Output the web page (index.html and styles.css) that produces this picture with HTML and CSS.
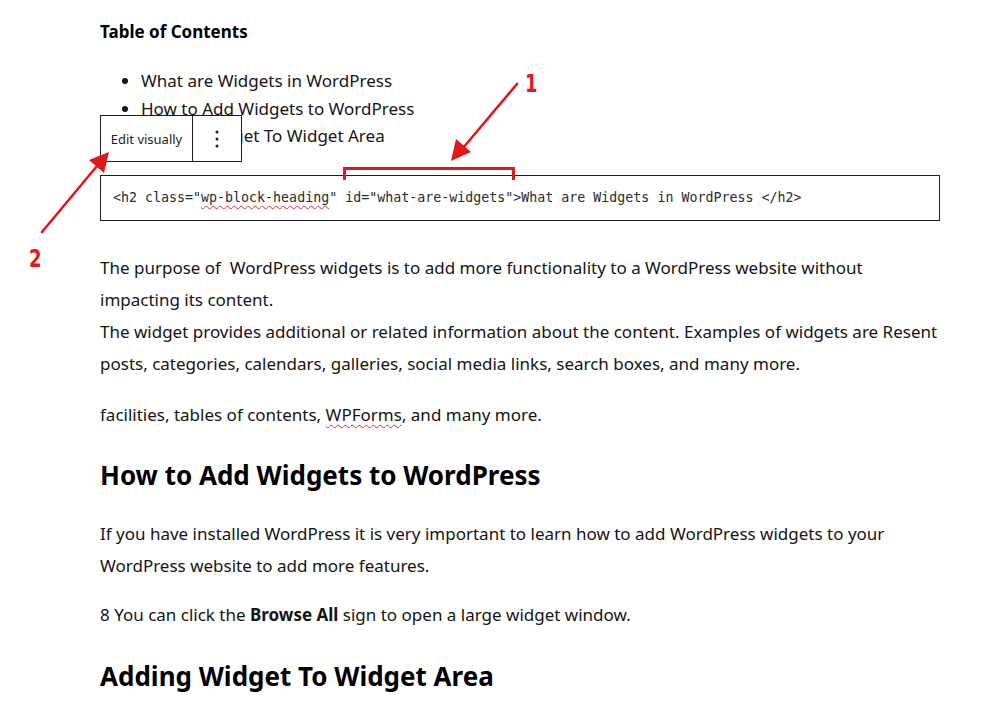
FILE: index.html
```html
<!DOCTYPE html>
<html lang="en">
<head>
<meta charset="utf-8">
<title>Widgets</title>
<link rel="stylesheet" href="styles.css">
</head>
<body>
<div class="page">
  <div class="content">
    <p class="toc-title">Table of Contents</p>
    <ul class="toc">
      <li>What are Widgets in WordPress</li>
      <li>How to Add Widgets to WordPress</li>
      <li>Adding Widget To Widget Area</li>
    </ul>
    <div class="code-block">&lt;h2 class="<span class="typo">wp-block-heading</span>" id="what-are-widgets"&gt;What are Widgets in WordPress &lt;/h2&gt;</div>
    <p class="para">The purpose of &nbsp;WordPress widgets is to add more functionality to a WordPress website without<br>impacting its content.<br>The widget provides additional or related information about the content. Examples of widgets are Resent<br>posts, categories, calendars, galleries, social media links, search boxes, and many more.</p>
    <p class="para p2">facilities, tables of contents, <span class="typo">WPForms</span>, and many more.</p>
    <h2 class="heading h-first">How to Add Widgets to WordPress</h2>
    <p class="para p3">If you have installed WordPress it is very important to learn how to add WordPress widgets to your<br>WordPress website to add more features.</p>
    <p class="para p4">8 You can click the <strong>Browse All</strong> sign to open a large widget window.</p>
    <h2 class="heading h-second">Adding Widget To Widget Area</h2>
  </div>

  <div class="toolbar">
    <button class="tb-btn tb-edit">Edit visually</button>
    <button class="tb-btn tb-more" aria-label="Options">
      <svg width="4" height="18" viewBox="0 0 4 18"><circle cx="2" cy="2" r="1.5" fill="#1e1e1e"/><circle cx="2" cy="9" r="1.5" fill="#1e1e1e"/><circle cx="2" cy="16" r="1.5" fill="#1e1e1e"/></svg>
    </button>
  </div>

  <svg class="annot" width="984" height="716" viewBox="0 0 984 716">
    <path d="M344.5 180 V168.5 H513.5 V180" fill="none" stroke="#e3161b" stroke-width="3"/>
    <line x1="517" y1="84" x2="463" y2="148" stroke="#e3161b" stroke-width="2.6" stroke-linecap="round"/>
    <polygon points="451,161 456,139 471,152" fill="#e3161b"/>
    <line x1="42" y1="232" x2="97" y2="166" stroke="#e3161b" stroke-width="2.6" stroke-linecap="round"/>
    <polygon points="109,152 104,173 89,160" fill="#e3161b"/>
  </svg>
  <span class="num num1">1</span>
  <span class="num num2">2</span>
</div>
</body>
</html>
```
FILE: styles.css
```css
html, body {
  margin: 0;
  padding: 0;
  background: #ffffff;
}
.page {
  position: relative;
  width: 984px;
  height: 716px;
  overflow: hidden;
  font-family: "Noto Sans", "Open Sans", sans-serif;
  color: #141414;
}
.content {
  padding-left: 100px;
  width: 840px;
}
.toc-title {
  margin: 20px 0 0;
  font-size: 17px;
  line-height: 24px;
  font-weight: 700;
  color: #000;
}
.toc {
  margin: 23px 0 0;
  padding-left: 41px;
  font-size: 17px;
  line-height: 27.5px;
}
.code-block {
  margin-top: 25px;
  height: 44px;
  border: 1px solid #1e1e1e;
  box-sizing: content-box;
  padding: 0 12px;
  display: flex;
  align-items: center;
  font-family: "DejaVu Sans Mono", "Liberation Mono", monospace;
  font-size: 13.3px;
  color: #2b2b2b;
  white-space: pre;
}
.typo {
  text-decoration: underline wavy #d92b2b;
  text-decoration-thickness: 1px;
  text-underline-offset: 3px;
}
.para {
  margin: 31px 0 0;
  font-size: 17px;
  line-height: 32px;
  white-space: nowrap;
}
.p2 { margin-top: 19px; }
.p3 { margin-top: 25px; }
.p4 { margin-top: 17px; }
.heading {
  margin: 26px 0 0;
  font-size: 26px;
  line-height: 36px;
  font-weight: 700;
  color: #000;
}
.h-second { margin-top: 27px; }

.toolbar {
  position: absolute;
  left: 100px;
  top: 115px;
  display: flex;
  height: 47px;
  border: 1px solid #1e1e1e;
  box-sizing: border-box;
  background: #fff;
}
.tb-btn {
  border: 0;
  background: transparent;
  margin: 0;
  padding: 0;
  font-family: "Noto Sans", "Open Sans", sans-serif;
  color: #1e1e1e;
  display: flex;
  align-items: center;
  justify-content: center;
}
.tb-edit {
  width: 92px;
  font-size: 13px;
  border-right: 1px solid #1e1e1e;
}
.tb-more {
  width: 48px;
}
.annot {
  position: absolute;
  left: 0;
  top: 0;
  pointer-events: none;
}
.num {
  position: absolute;
  font-family: "DejaVu Sans", sans-serif;
  font-stretch: condensed;
  font-weight: 700;
  font-size: 25px;
  line-height: 1;
  color: #e3161b;
  transform: scaleX(0.8);
  transform-origin: left top;
}
.num1 { left: 525px; top: 71px; }
.num2 { left: 29px; top: 246px; }
```
